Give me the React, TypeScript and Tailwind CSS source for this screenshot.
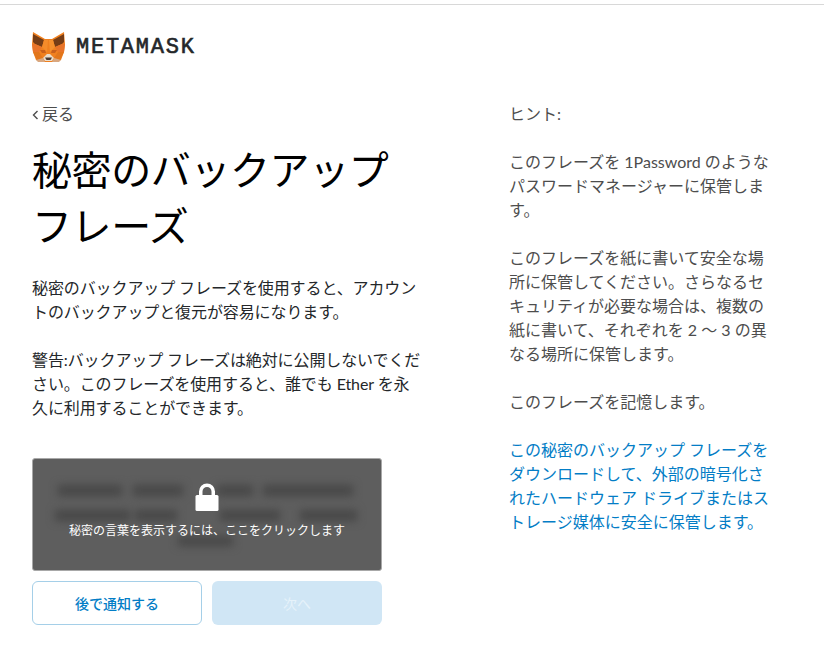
import React from 'react';

const fontStack = "font-['Lato','Noto_Sans_CJK_JP',sans-serif]";

function FoxLogo() {
  return (
    <svg width="33" height="30" viewBox="0 0 33 30" className="shrink-0">
      <polygon points="1,0 13,7 20,7 32,0 33,12 32,20 29,28 21,30 12,30 4,28 1,20 0,12" fill="#f0801f" />
      <polygon points="1,2 12,8 10,15 3,12 1,10" fill="#763d16" />
      <polygon points="32,2 21,8 23,15 30,12 32,10" fill="#763d16" />
      <polygon points="10,15 12,8 16,8 15,20" fill="#f58c2a" />
      <polygon points="23,15 21,8 17,8 18,20" fill="#f6912e" />
      <polygon points="0,12 3,12 10,15 7,20 1,20" fill="#e8742a" />
      <polygon points="33,12 30,12 23,15 26,20 32,20" fill="#e8742a" />
      <polygon points="8,18 13,18 14,21 10,21" fill="#c9601c" />
      <polygon points="25,18 20,18 19,21 23,21" fill="#c9601c" />
      <polygon points="1,20 7,20 11,26 5,28" fill="#e2761b" />
      <polygon points="32,20 26,20 22,26 28,28" fill="#e2761b" />
      <polygon points="11,26 15,22 18,22 22,26 20,29 13,29" fill="#e9dccb" />
      <polygon points="13,25.5 20,25.5 18.5,28 14.5,28" fill="#4a3b34" />
      <polygon points="4,28 11,26 13,30 6,30" fill="#d9a77f" />
      <polygon points="29,28 22,26 20,30 27,30" fill="#d9a77f" />
    </svg>
  );
}

export default function App() {
  return (
    <div className={`w-[824px] h-[660px] overflow-hidden bg-white ${fontStack}`}>
      <div className="h-[5px] border-b border-[#d8d8d8]" />

      <header className="flex items-center h-[56px] mt-[14px] pl-[32px] gap-[11px]">
        <FoxLogo />
        <span className="font-['Liberation_Mono',monospace] text-[22px] font-normal tracking-[1.75px] text-[#24272a] [-webkit-text-stroke:0.6px_#24272a]">
          METAMASK
        </span>
      </header>

      <div className="flex pl-[32px] mt-[27px]">
        <div className="w-[350px]">
          <div className="h-[24px] text-[16px] leading-[24px] text-[#4d4d4d] flex items-center gap-[3px]">
            <svg width="7" height="10" viewBox="0 0 7 10" className="mt-[2px]">
              <path d="M5.5 1 1.5 5l4 4" fill="none" stroke="#4d4d4d" strokeWidth="1.4" />
            </svg>
            <span>戻る</span>
          </div>

          <h1 className="mt-[16px] text-[40px] leading-[56px] tracking-[-0.4px] text-black whitespace-nowrap">
            秘密のバックアップ
            <br />
            フレーズ
          </h1>

          <div className="mt-[22px] text-[16px] leading-[24px] tracking-[-0.1px] text-[#24272a] w-[392px]">
            <p>
              秘密のバックアップ フレーズを使用すると、アカウン
              <br />
              トのバックアップと復元が容易になります。
            </p>
            <p className="mt-[24px]">
              警告:バックアップ フレーズは絶対に公開しないでくだ
              <br />
              さい。このフレーズを使用すると、誰でも Ether を永
              <br />
              久に利用することができます。
            </p>
          </div>

          <div className="relative mt-[38px] h-[113px] w-[350px] rounded-[3px] overflow-hidden bg-[#5e5e5e] border border-[#a8a8a8]">
            <div className="pt-[26px] blur-[4px]">
              <div className="flex h-[11px] pl-[25px]">
                <div className="w-[64px] bg-[#474747]" />
                <div className="ml-[11px] w-[50px] bg-[#474747]" />
                <div className="ml-[34px] w-[36px] bg-[#474747]" />
                <div className="ml-[10px] w-[90px] bg-[#474747]" />
              </div>
              <div className="mt-[14px] flex h-[11px] pl-[22px]">
                <div className="w-[75px] bg-[#474747]" />
                <div className="ml-[5px] w-[42px] bg-[#474747]" />
                <div className="ml-[43px] w-[60px] bg-[#474747]" />
                <div className="ml-[20px] w-[57px] bg-[#474747]" />
              </div>
              <div className="mt-[15px] flex h-[10px] pl-[145px]">
                <div className="w-[55px] bg-[#474747]" />
              </div>
            </div>
            <div className="absolute inset-0 flex flex-col items-center pt-[24px] text-white">
              <svg width="24" height="29" viewBox="0 0 24 29">
                <path d="M4 13V8.5a8 8 0 0 1 16 0V13h-3.5V8.5a4.5 4.5 0 0 0-9 0V13z" fill="white" />
                <rect x="0.5" y="12" width="23" height="16" rx="1.5" fill="white" />
              </svg>
              <span className="mt-[10px] text-[12px] leading-[18px]">
                秘密の言葉を表示するには、ここをクリックします
              </span>
            </div>
          </div>

          <div className="mt-[10px] flex gap-[10px] w-[350px]">
            <button className="w-[170px] h-[44px] rounded-[6px] border border-[#a5cfe8] bg-white text-[14px] font-medium text-[#037dc6]">
              後で通知する
            </button>
            <button className="w-[170px] h-[44px] rounded-[6px] bg-[#d0e6f5] text-[14px] text-[#e6f2fa]">
              次へ
            </button>
          </div>
        </div>

        <aside className="ml-[128px] -translate-x-px w-[288px] text-[16px] leading-[24px] text-[#4d4d4d]">
          <p>ヒント:</p>
          <p className="mt-[24px]">
            このフレーズを 1Password のような
            <br />
            パスワードマネージャーに保管しま
            <br />
            す。
          </p>
          <p className="mt-[24px]">
            このフレーズを紙に書いて安全な場
            <br />
            所に保管してください。さらなるセ
            <br />
            キュリティが必要な場合は、複数の
            <br />
            紙に書いて、それぞれを 2 〜 3 の異
            <br />
            なる場所に保管します。
          </p>
          <p className="mt-[24px]">このフレーズを記憶します。</p>
          <p className="mt-[24px] text-[#037dc6]">
            この秘密のバックアップ フレーズを
            <br />
            ダウンロードして、外部の暗号化さ
            <br />
            れたハードウェア ドライブまたはス
            <br />
            トレージ媒体に安全に保管します。
          </p>
        </aside>
      </div>
    </div>
  );
}
